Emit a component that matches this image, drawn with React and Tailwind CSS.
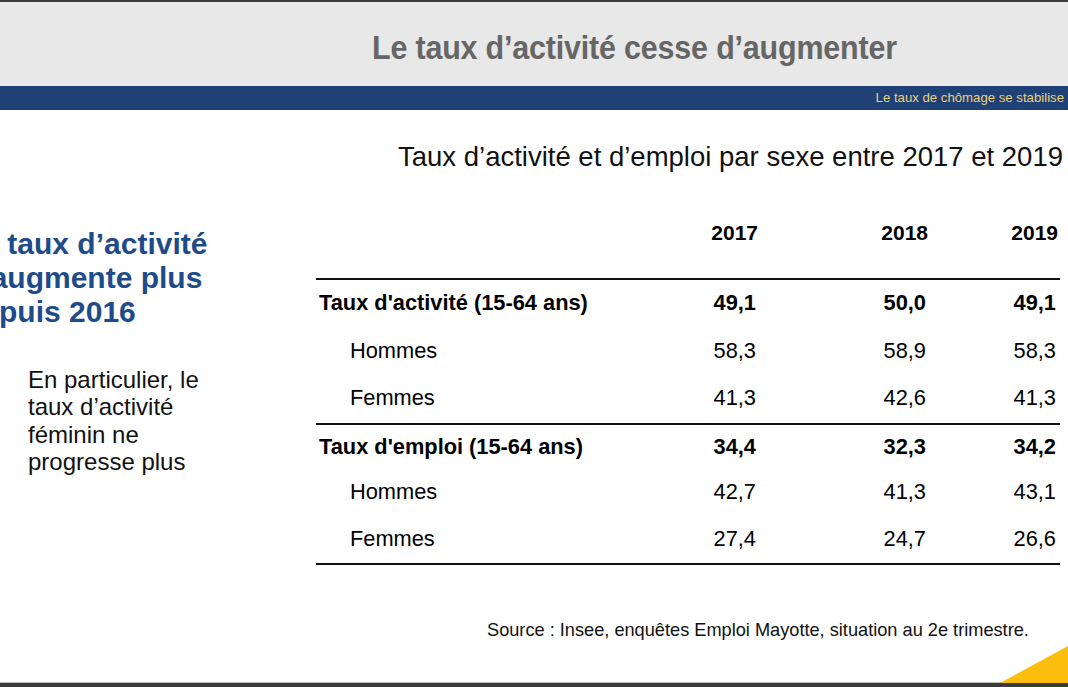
import React from "react";

const rows = [
  { label: "Taux d'activité (15-64 ans)", bold: true, v: ["49,1", "50,0", "49,1"] },
  { label: "Hommes", v: ["58,3", "58,9", "58,3"] },
  { label: "Femmes", v: ["41,3", "42,6", "41,3"] },
  { label: "Taux d'emploi (15-64 ans)", bold: true, v: ["34,4", "32,3", "34,2"], rule: true },
  { label: "Hommes", v: ["42,7", "41,3", "43,1"] },
  { label: "Femmes", v: ["27,4", "24,7", "26,6"] },
];

const cols = "grid grid-cols-[384px_58px_170px_130px]";

const App = () => {
  return (
    <div className="relative w-[1068px] h-[687px] overflow-hidden bg-white flex flex-col font-['Liberation_Sans',Arial,sans-serif] text-black">
      <div className="h-[2px] bg-[#3c3c3c]" />
      <div className="h-[84px] bg-[#e8e8e8] flex items-center">
        <h1 className="ml-[372px] mt-[8px] text-[33px] font-bold text-[#666666] tracking-[-0.2px] origin-left scale-x-[0.923] whitespace-nowrap">
          Le taux d’activité cesse d’augmenter
        </h1>
      </div>
      <div className="h-[24px] bg-[#1f4176] flex items-center justify-end pr-[4px]">
        <span className="text-[13.2px] text-[#e9d27c]">Le taux de chômage se stabilise</span>
      </div>

      <div className="flex-1 flex">
        <div className="w-[316px] shrink-0">
          <h2 className="mt-[117px] -ml-[36px] text-[30px] leading-[34px] font-bold text-[#1e4c8a] whitespace-nowrap">
            Le taux d’activité<br />n’augmente plus<br />depuis 2016
          </h2>
          <p className="mt-[37px] ml-[28px] text-[24px] leading-[27.3px] text-[#111]">
            En particulier, le<br />taux d’activité<br />féminin ne<br />progresse plus
          </p>
        </div>

        <div className="flex-1 flex flex-col">
          <div className="mt-[32px] h-[30px] flex items-center justify-end pr-[5px]">
            <span className="text-[27.5px] text-[#111]">Taux d’activité et d’emploi par sexe entre 2017 et 2019</span>
          </div>

          <div className="w-[744px]">
            <div className={`${cols} h-[108px] items-end pb-[30px] border-b-2 border-[#111] text-[21px] font-bold`}>
              <div />
              <div className="text-right">2017</div>
              <div className="text-right">2018</div>
              <div className="text-right">2019</div>
            </div>
            {rows.map((r, i) => (
              <div
                key={i}
                className={`${cols} ${i < 3 ? "h-[47.5px]" : "h-[46.8px]"} items-center text-[21.8px] ${r.bold ? "font-bold" : ""} ${r.rule ? "border-t-2 border-[#111]" : ""}`}
              >
                <div className={r.bold ? "pl-[3px]" : "pl-[34px]"}>{r.label}</div>
                {r.v.map((x, j) => (
                  <div key={j} className="text-right pr-[2px]">{x}</div>
                ))}
              </div>
            ))}
            <div className="border-t-2 border-[#111]" />
          </div>

          <div className="mt-[52px] ml-[171px] text-[18.2px] text-[#111]">
            Source : Insee, enquêtes Emploi Mayotte, situation au 2e trimestre.
          </div>
        </div>
      </div>

      <div className="h-[1px] bg-[#bdbdbd]" />
      <div className="h-[4px] bg-[#3a3b3d]" />

      <svg className="absolute right-0 bottom-[4px]" width="68" height="37" viewBox="0 0 68 37">
        <polygon points="0,37 68,37 68,0" fill="#fbbd0e" />
      </svg>
    </div>
  );
};

export default App;
